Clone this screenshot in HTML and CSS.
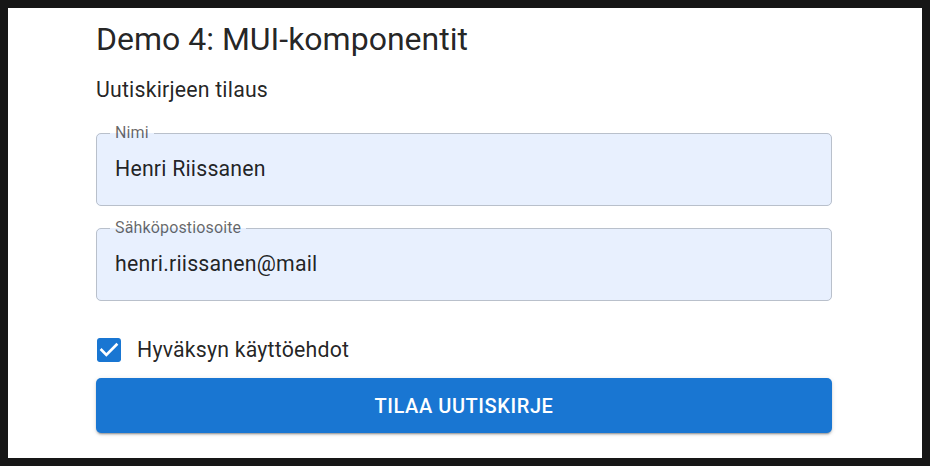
FILE: index.html
```html
<!DOCTYPE html>
<html lang="fi">
<head>
<meta charset="utf-8">
<title>Demo 4: MUI-komponentit</title>
<link rel="stylesheet" href="styles.css">
</head>
<body>
<div class="frame">
  <main class="container">
    <h1 class="title">Demo 4: MUI-komponentit</h1>
    <h2 class="subtitle">Uutiskirjeen tilaus</h2>
    <form class="form">
      <fieldset class="field">
        <legend class="field-label">Nimi</legend>
        <div class="field-value">Henri Riissanen</div>
      </fieldset>
      <fieldset class="field">
        <legend class="field-label">Sähköpostiosoite</legend>
        <div class="field-value">henri.riissanen@mail</div>
      </fieldset>
      <label class="check-row">
        <span class="check-box">
          <svg viewBox="3 3 18 18" width="24" height="24" aria-hidden="true"><path fill="#1976d2" d="M19 3H5c-1.11 0-2 .9-2 2v14c0 1.1.89 2 2 2h14c1.11 0 2-.9 2-2V5c0-1.1-.89-2-2-2z"/><path fill="#fff" d="M10 17l-5-5 1.41-1.41L10 14.17l7.59-7.59L19 8l-9 9z"/></svg>
        </span>
        <span class="check-label">Hyväksyn käyttöehdot</span>
      </label>
      <button type="button" class="submit">Tilaa uutiskirje</button>
    </form>
  </main>
</div>
</body>
</html>
```
FILE: styles.css
```css
html, body {
  margin: 0;
  padding: 0;
}
body {
  background: #161616;
  padding: 8px;
  font-family: Roboto, "Liberation Sans", sans-serif;
  color: rgba(0, 0, 0, 0.87);
}
.frame {
  background: #fff;
  height: 450px;
  overflow: hidden;
  padding-right: 2px;
}
.container {
  width: 736px;
  margin: 0 auto;
  padding-top: 13px;
}
.title {
  margin: 0;
  font-size: 32px;
  line-height: 36px;
  font-weight: 400;
}
.subtitle {
  margin: 19px 0 0;
  font-size: 21.3px;
  line-height: 28px;
  font-weight: 400;
  letter-spacing: 0.2px;
}
.form {
  display: flex;
  flex-direction: column;
  margin-top: 21px;
}
.field {
  margin: 0;
  padding: 0 18px;
  border: 1px solid #b9c0cb;
  border-radius: 5px;
  background: #e8f0fe;
  min-width: 0;
}
.field + .field {
  margin-top: 14px;
}
.field-label {
  margin-left: -5px;
  padding: 0 5px;
  font-size: 16px;
  line-height: 16px;
  letter-spacing: 0.15px;
  color: rgba(0, 0, 0, 0.6);
}
.field-value {
  font-size: 21.3px;
  line-height: 24px;
  letter-spacing: 0.2px;
  padding: 16px 0 24px;
}
.check-row {
  display: flex;
  align-items: center;
  gap: 16px;
  margin-top: 37px;
  padding-left: 1px;
}
.check-box {
  display: flex;
}
.check-box svg {
  display: block;
}
.check-label {
  font-size: 21.3px;
  line-height: 24px;
  letter-spacing: 0.2px;
}
.submit {
  margin-top: 16px;
  height: 55px;
  border: 0;
  border-radius: 5px;
  background: #1976d2;
  color: #fff;
  font-family: inherit;
  font-size: 20px;
  font-weight: 500;
  letter-spacing: 0.57px;
  text-transform: uppercase;
  box-shadow: 0 3px 1px -2px rgba(0,0,0,0.2), 0 2px 2px 0 rgba(0,0,0,0.14), 0 1px 5px 0 rgba(0,0,0,0.12);
}
```
